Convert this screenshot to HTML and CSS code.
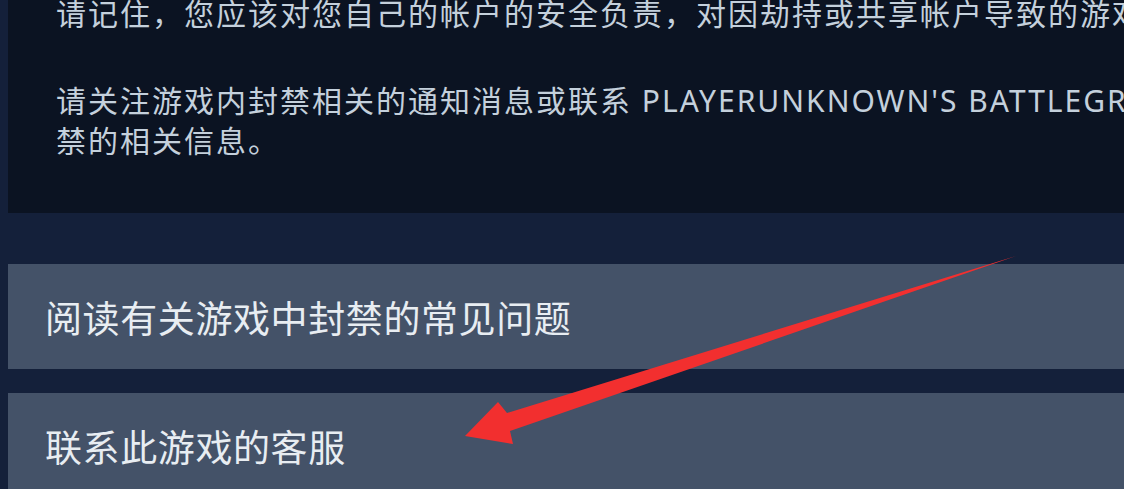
FILE: index.html
```html
<!DOCTYPE html>
<html lang="zh-CN">

<head>
    <meta charset="UTF-8">
    <meta name="viewport" content="width=device-width, initial-scale=1.0">
    <title>游戏封禁</title>
    <link rel="stylesheet" href="styles.css">
</head>

<body>
    <div class="page">
        <div class="notice">
            <p>请记住，您应该对您自己的帐户的安全负责，对因劫持或共享帐户导致的游戏封禁负责。</p>
            <p>请关注游戏内封禁相关的通知消息或联系 PLAYERUNKNOWN'S BATTLEGROUNDS 的开发者以获取有关封<br>禁的相关信息。</p>
        </div>

        <div class="actions">
            <a class="action" href="#">阅读有关游戏中封禁的常见问题</a>
            <a class="action" href="#">联系此游戏的客服</a>
        </div>
    </div>

    <svg class="arrow" width="1124" height="489" viewBox="0 0 1124 489">
        <polygon points="1016,256 507,413 498,402 465,436 513,444 510,431" fill="#f22f2f" />
    </svg>
</body>

</html>
```

FILE: styles.css
```css
body {
    margin: 0;
    background: #14203a;
    font-family: "Noto Sans", "Noto Sans CJK SC", sans-serif;
    overflow: hidden;
    position: relative;
    height: 489px;
}

.page {
    padding-left: 8px;
    margin-top: -6px;
    width: 1500px;
}

.notice {
    background: #0b1322;
    padding: 0 0 52px 48px;
    color: #c4d0dc;
    font-size: 30px;
    letter-spacing: 2px;
}

.notice p {
    margin: 0;
    line-height: 40px;
    white-space: nowrap;
}

.notice p + p {
    margin-top: 47px;
}

.actions {
    display: flex;
    flex-direction: column;
    gap: 24px;
    margin-top: 51px;
}

.action {
    display: flex;
    align-items: center;
    height: 105px;
    padding-left: 37px;
    background: #445268;
    color: #e8edf2;
    font-size: 37px;
    letter-spacing: 0.6px;
    text-decoration: none;
}

.arrow {
    position: absolute;
    left: 0;
    top: 0;
}
```
